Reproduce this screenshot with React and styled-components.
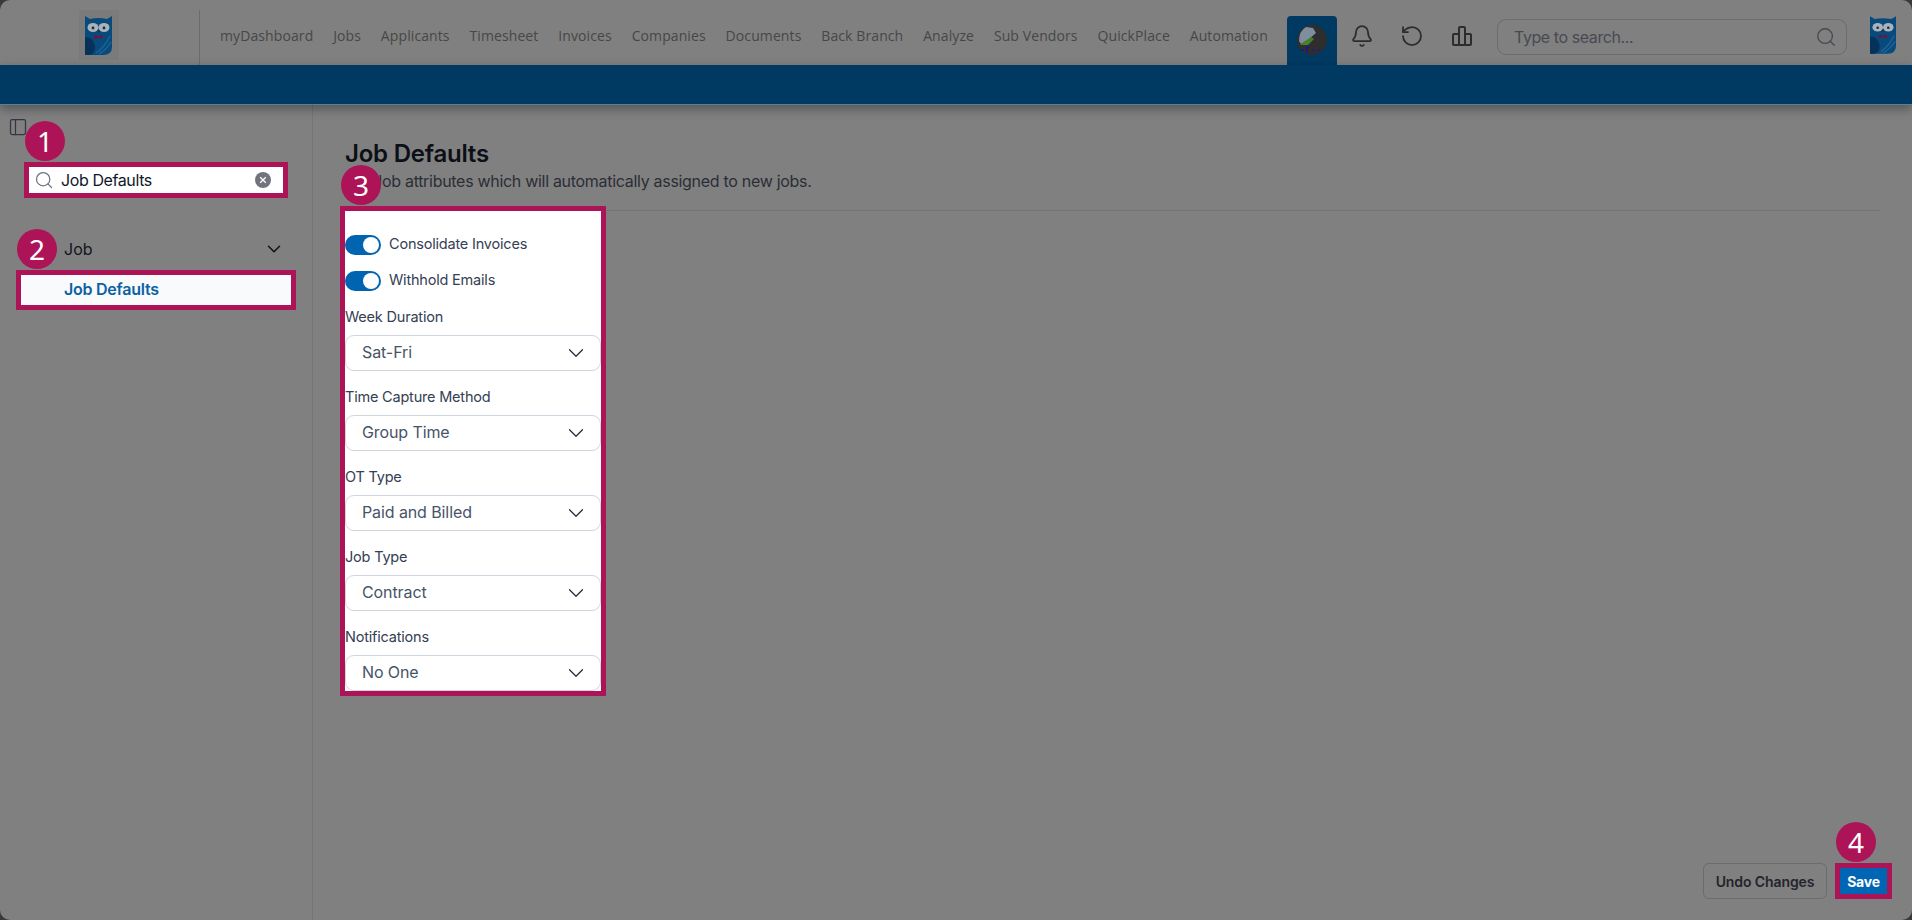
import React from "react";
import styled, { createGlobalStyle } from "styled-components";
import { Bell, ChevronDown, PanelLeft, RotateCcw, Search } from "lucide-react";

const Global = createGlobalStyle`
  html, body { margin: 0; padding: 0; background: #3a3a3a; }
  body { font-family: Inter, "Noto Sans", sans-serif; overflow: hidden; }
  * { box-sizing: border-box; }
`;

const Page = styled.div`
  width: 1912px; height: 920px; display: flex; flex-direction: column;
  background: #808080; border-radius: 10px; overflow: hidden;
`;
const Header = styled.header`
  height: 65px; display: flex; align-items: stretch; flex: none;
`;
const LogoCell = styled.div`
  width: 200px; margin-top: 10px; border-right: 1px solid #6c6c6c;
  display: flex; justify-content: center; padding-right: 2px; flex: none;
`;
const LogoBox = styled.div`
  width: 40px; height: 50px; background: #7b7b7b; display: flex; align-items: center; justify-content: center;
`;
const Nav = styled.nav`
  display: flex; align-items: center; gap: 19.85px; padding: 6px 0 0 20px; flex: none; width: 1087px;
`;
const NavItem = styled.a`
  font-family: "Open Sans", sans-serif; font-size: 14px; color: #474747; letter-spacing: .1px; white-space: nowrap;
`;
const ActiveTab = styled.div`
  width: 50px; height: 49px; margin-top: 16px; background: #003a63; border-radius: 4px 4px 0 0;
  display: flex; justify-content: center; padding-top: 9px; flex: none;
`;
const IconBtn = styled.div`
  width: 50px; display: flex; align-items: center; justify-content: center; color: #2c2c2c; flex: none; padding-top: 7px;
`;
const SearchBox = styled.div`
  width: 350px; height: 36px; margin: 19px 0 0 10px; border: 1px solid #6c6c6c; border-radius: 9px;
  display: flex; align-items: center; padding: 0 9px 0 16px; color: #474a52; font-size: 16px; flex: none;
  justify-content: space-between; letter-spacing: -.42px;
`;
const EndLogo = styled.div`
  margin-left: 23px; padding-top: 15px; flex: none;
`;
const Strip = styled.div`
  height: 40px; background: #003a63; flex: none; box-shadow: 0 4px 10px rgba(0,0,0,.35);
  border-bottom: 1px solid #5a7f99; position: relative;
`;
const Body = styled.div`
  flex: 1; display: flex; min-height: 0;
`;
const Sidebar = styled.aside`
  width: 313px; border-right: 1px solid #757575; padding-top: 12px; flex: none;
`;
const Toggle = styled.div`
  margin-left: 8px; height: 20px; display: flex; color: #33373f;
`;
const Frame = styled.div`
  position: relative; border: 5px solid #ad1457;
`;
const Badge = styled.div`
  position: absolute; top: -46px; left: -4px; width: 40px; height: 40px; border-radius: 50%;
  background: #ad1457; color: #fff; font-family: "Noto Sans", sans-serif; font-size: 28px; font-weight: 400;
  display: flex; align-items: center; justify-content: center; z-index: 2;
`;
const SearchFrame = styled(Frame)`
  margin: 25px 0 0 24px; width: 264px; height: 36px; background: #fff;
  display: flex; align-items: center; padding: 0 12px 0 5px; color: #0f172a; font-size: 16px;
`;
const SearchIcon = styled(Search)`
  color: #6b7280; margin-right: 7px; flex: none;
`;
const SearchText = styled.span`
  flex: 1; letter-spacing: -.4px;
`;
const JobRow = styled.div`
  margin-top: 31px; height: 41px; padding: 0 27px 2px 64px; display: flex; align-items: center;
  justify-content: space-between; font-size: 16px; color: #14141c;
`;
const NavFrame = styled(Frame)`
  margin-left: 16px; width: 280px; height: 40px; background: #f8fafc; padding: 0 0 2px 43px;
  display: flex; align-items: center; font-size: 16px; font-weight: 600; color: #0a62a3; letter-spacing: -.25px;
`;
const Main = styled.main`
  flex: 1; min-width: 0; padding: 33px 32px 21px 32px; display: flex; flex-direction: column;
`;
const TitleBlock = styled.div`
  padding-bottom: 17px; border-bottom: 1px solid #757575;
`;
const Title = styled.h1`
  margin: 0; font-size: 24px; line-height: 31px; font-weight: 600; color: #0c0f16; letter-spacing: -.22px;
`;
const Sub = styled.p`
  margin: 0; font-size: 16px; line-height: 24px; color: #2b2e36; letter-spacing: -.3px;
`;
const FormFrame = styled(Frame)`
  margin: -5px 0 0 -5px; width: 266px; background: #fff; padding-top: 24px;
  display: flex; flex-direction: column; gap: 16px;
`;
const SwitchRow = styled.div`
  display: flex; align-items: center; gap: 8px; height: 20px; font-size: 14.5px; color: #344054; letter-spacing: -.2px;
  line-height: 18px;
`;
const SwitchText = styled.span`
  margin-top: -2px;
`;
const Track = styled.span`
  width: 36px; height: 20px; border-radius: 10px; background: #0064b0; display: flex; align-items: center;
  justify-content: ${p => (p.$on ? "flex-end" : "flex-start")}; padding: 0 2px;
`;
const Thumb = styled.span`
  width: 16px; height: 16px; border-radius: 50%; background: #fff;
`;
const Field = styled.div`
  display: flex; flex-direction: column; gap: 8px;
`;
const Label = styled.label`
  font-size: 14.5px; line-height: 20px; color: #344054; letter-spacing: -.2px;
`;
const Select = styled.div`
  height: 36px; border: 1px solid #d0d5dd; border-radius: 9px; background: #fff; display: flex; align-items: center;
  justify-content: space-between; padding: 0 11px 2px 16px; font-size: 16px; color: #475467; letter-spacing: -.1px;
`;
const Chevron = styled(ChevronDown)`
  color: #1d2939; flex: none; margin-top: 2px;
`;
const Footer = styled.div`
  margin: auto -12px 0 0; display: flex; justify-content: flex-end; gap: 8px;
`;
const Undo = styled.button`
  width: 124px; height: 36px; border: 1px solid #6c6c6c; border-radius: 6px; background: transparent;
  font: 600 14px Inter, sans-serif; color: #24242c; padding: 0; letter-spacing: -.1px;
`;
const SaveFrame = styled(Frame)`
  width: 57px; height: 36px; background: #0066b3; color: #fff; font-size: 14px; font-weight: 700;
  display: flex; align-items: center; justify-content: center; letter-spacing: -.2px;
`;

const Owl = ({ w = 27, h = 40 }) => (
  <svg width={w} height={h} viewBox="0 0 27 40">
    <path d="M0 1 L5 4 Q13.5 2 22 4 L27 1 V32 Q27 40 18 40 H0 Z" fill="#084a7c" />
    <path d="M0 40 V22 Q9 22 10 32 Q10 38 5 40 Z" fill="#06325a" />
    <path d="M11 38 Q20 32 25 21 M14 39 Q22 34 26 27" stroke="#1f6396" strokeWidth="1.5" fill="none" />
    <ellipse cx="8" cy="12.5" rx="5.5" ry="4.5" fill="#a9b3bc" />
    <ellipse cx="19" cy="12.5" rx="5.5" ry="4.5" fill="#a9b3bc" />
    <circle cx="8" cy="13" r="1.4" fill="#222b35" />
    <circle cx="19" cy="13" r="1.4" fill="#222b35" />
    <path d="M12.5 15 h2 l-1 3 z" fill="#2b2b2b" />
    <path d="M9.5 20 l4 1.5 4-1.5 v4 l-4-1.5 -4 1.5 z" fill="#7c0f3a" />
  </svg>
);

const Avatar = () => (
  <svg width="30" height="30" viewBox="0 0 30 30">
    <circle cx="15" cy="15" r="15" fill="#2e2e2e" />
    <path d="M2 16 Q2 6 9 2 L16 3 L19 8 L12 14 L4 19 Z" fill="#7f8e9e" />
    <path d="M3 20 L14 12 L17 14 L11 20 Z" fill="#47802c" />
    <path d="M4 25 h3 M10 22 v6 M9 22 h4 M15 25 h3 M21 25 h3" stroke="#1010b0" strokeWidth="1.2" />
  </svg>
);

const Bars = () => (
  <svg width="22" height="22" viewBox="0 0 22 22" fill="none" stroke="currentColor" strokeWidth="2" strokeLinejoin="round">
    <rect x="2" y="9" width="6" height="11" rx="1" />
    <rect x="8" y="2" width="6" height="18" rx="1" />
    <rect x="14" y="9" width="6" height="11" rx="1" />
  </svg>
);

const ClearIcon = () => (
  <svg width="16" height="16" viewBox="0 0 16 16">
    <circle cx="8" cy="8" r="8" fill="#73737d" />
    <path d="M5.2 5.2 L10.8 10.8 M10.8 5.2 L5.2 10.8" stroke="#fff" strokeWidth="1.3" />
  </svg>
);

const NAV = ["myDashboard", "Jobs", "Applicants", "Timesheet", "Invoices", "Companies", "Documents", "Back Branch", "Analyze", "Sub Vendors", "QuickPlace", "Automation"];
const FIELDS = [
  ["Week Duration", "Sat-Fri"],
  ["Time Capture Method", "Group Time"],
  ["OT Type", "Paid and Billed"],
  ["Job Type", "Contract"],
  ["Notifications", "No One"],
];

export default function App() {
  return (
    <Page>
      <Global />
      <Header>
        <LogoCell>
          <LogoBox><Owl /></LogoBox>
        </LogoCell>
        <Nav>
          {NAV.map(n => <NavItem key={n}>{n}</NavItem>)}
        </Nav>
        <ActiveTab><Avatar /></ActiveTab>
        <IconBtn><Bell size={24} strokeWidth={1.75} /></IconBtn>
        <IconBtn><RotateCcw size={24} strokeWidth={1.75} /></IconBtn>
        <IconBtn><Bars /></IconBtn>
        <SearchBox>
          <span>Type to search...</span>
          <Search size={22} strokeWidth={1.5} />
        </SearchBox>
        <EndLogo><Owl w={26} h={39} /></EndLogo>
      </Header>
      <Strip />
      <Body>
        <Sidebar>
          <Toggle><PanelLeft size={20} strokeWidth={1.5} /></Toggle>
          <SearchFrame>
            <Badge>1</Badge>
            <SearchIcon size={20} strokeWidth={1.5} />
            <SearchText>Job Defaults</SearchText>
            <ClearIcon />
          </SearchFrame>
          <JobRow>
            <span>Job</span>
            <ChevronDown size={22} strokeWidth={1.75} />
          </JobRow>
          <NavFrame>
            <Badge>2</Badge>
            Job Defaults
          </NavFrame>
        </Sidebar>
        <Main>
          <TitleBlock>
            <Title>Job Defaults</Title>
            <Sub>Set Job attributes which will automatically assigned to new jobs.</Sub>
          </TitleBlock>
          <FormFrame>
            <Badge>3</Badge>
            <SwitchRow><Track $on><Thumb /></Track><SwitchText>Consolidate Invoices</SwitchText></SwitchRow>
            <SwitchRow><Track $on><Thumb /></Track><SwitchText>Withhold Emails</SwitchText></SwitchRow>
            {FIELDS.map(([label, value]) => (
              <Field key={label}>
                <Label>{label}</Label>
                <Select>{value}<Chevron size={26} strokeWidth={1.1} /></Select>
              </Field>
            ))}
          </FormFrame>
          <Footer>
            <Undo>Undo Changes</Undo>
            <SaveFrame><Badge>4</Badge>Save</SaveFrame>
          </Footer>
        </Main>
      </Body>
    </Page>
  );
}
